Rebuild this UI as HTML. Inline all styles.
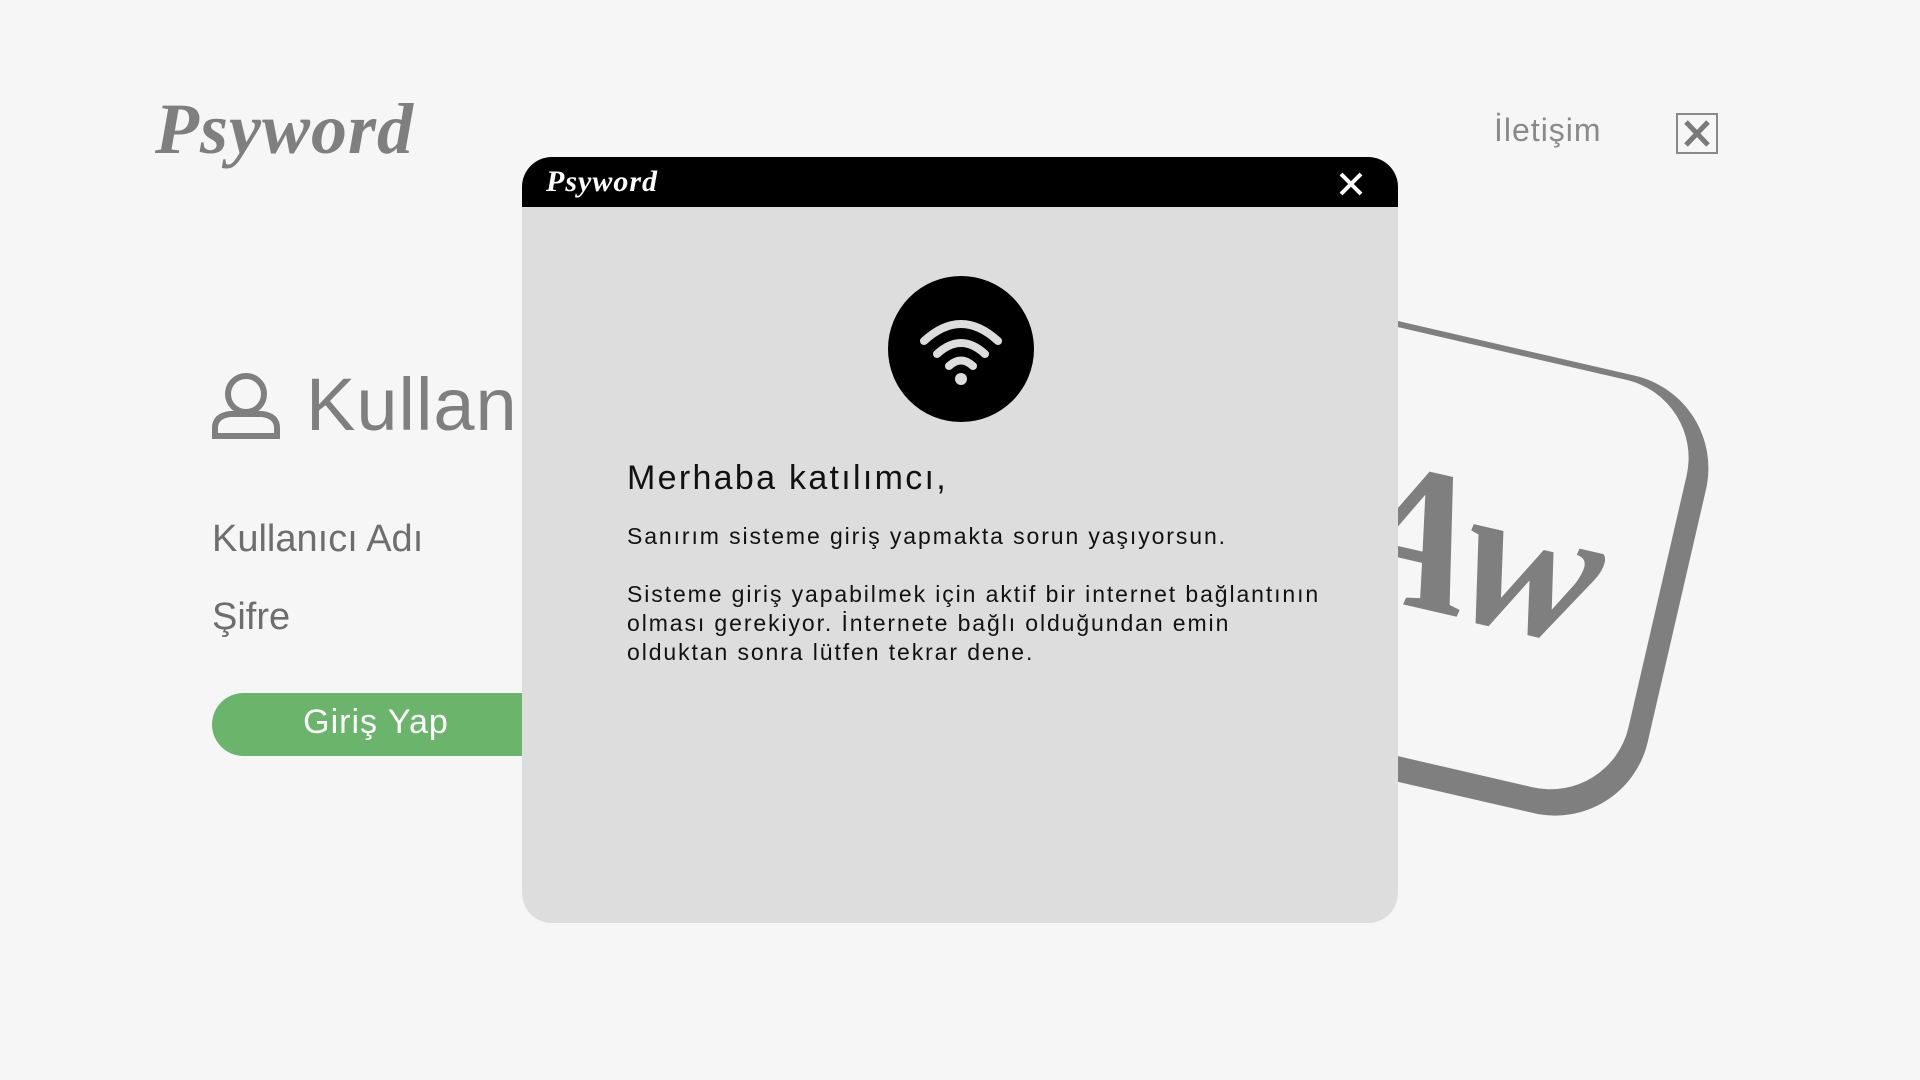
<!DOCTYPE html>
<html><head><meta charset="utf-8"><style>
*{margin:0;padding:0;box-sizing:border-box}
body{width:1920px;height:1080px;background:#f6f6f6;position:relative;overflow:hidden;font-family:"Liberation Sans",sans-serif}
.a{position:absolute;white-space:nowrap}
.logo{font-family:"Liberation Serif",serif;font-weight:bold}
</style></head><body>
<svg class="a" style="left:0;top:0" width="1920" height="1080">
 <g transform="translate(1398,321) rotate(13)">
  <rect x="-600" y="0" width="938" height="449" rx="95" fill="#7f7f7f"/>
  <rect x="-600" y="6" width="916" height="418" rx="80" fill="#f6f6f6"/>
  <text x="255" y="275" text-anchor="end" font-family="Liberation Serif,serif" font-weight="bold" font-style="italic" font-size="205" fill="#7f7f7f">Aw</text>
 </g>
</svg>
<div class="a logo" style="left:155px;top:88px;font-size:72px;color:#7f7f7f;font-style:italic;letter-spacing:1px">Psyword</div>
<div class="a" style="left:1494px;top:112px;font-size:32px;color:#8a8a8a;letter-spacing:1px">İletişim</div>
<div class="a" style="left:1676px;top:113px;width:42px;height:41px;border:2px solid #8a8a8a"></div>
<svg class="a" style="left:1676px;top:113px" width="42" height="41"><path d="M10 9 L32 32 M32 9 L10 32" stroke="#7a7a7a" stroke-width="5"/></svg>
<svg class="a" style="left:210px;top:372px" width="72" height="68"><circle cx="36" cy="22" r="18" fill="none" stroke="#7f7f7f" stroke-width="6"/><path d="M5 64 V56 Q5 44 20 42 H52 Q67 44 67 56 V64 Z" fill="none" stroke="#7f7f7f" stroke-width="6"/></svg>
<div class="a" style="left:306px;top:362px;font-size:74px;color:#7f7f7f;letter-spacing:1px">Kullan</div>
<div class="a" style="left:212px;top:518px;font-size:38px;color:#6e6e6e">Kullanıcı Adı</div>
<div class="a" style="left:212px;top:596px;font-size:38px;color:#6e6e6e">Şifre</div>
<div class="a" style="left:212px;top:693px;width:340px;height:63px;border-radius:32px;background:#6bb46b"></div>
<div class="a" style="left:212px;top:703px;width:336px;text-align:center;font-size:34px;color:#fff">
<span style="position:relative;left:-4px;letter-spacing:1px">Giriş Yap</span></div>
<div class="a" style="left:522px;top:157px;width:876px;height:766px;border-radius:30px;background:#dddddd;overflow:hidden">
 <div style="height:50px;background:#000;position:relative">
  <div class="a logo" style="left:24px;top:8px;font-size:30px;color:#fff;font-style:italic;letter-spacing:1px">Psyword</div>
  <svg class="a" style="left:816px;top:14px" width="26" height="26"><path d="M3 3 L23 23 M23 3 L3 23" stroke="#fff" stroke-width="4"/></svg>
 </div>
 <svg class="a" style="left:365px;top:118px" width="148" height="148"><circle cx="74" cy="74" r="73" fill="#000"/>
  <g fill="none" stroke="#ddd" stroke-width="8" stroke-linecap="round"><path d="M37 66 Q74 32 111 66"/><path d="M50 79 Q74 57 98 79"/><path d="M62 91 Q74 80 86 91"/></g>
  <circle cx="74" cy="104" r="6" fill="#ddd"/></svg>
 <div class="a" style="left:105px;top:302px;font-size:34px;color:#111;letter-spacing:2.3px">Merhaba katılımcı,</div>
 <div class="a" style="left:105px;top:366px;font-size:23px;color:#111;letter-spacing:1.9px">Sanırım sisteme giriş yapmakta sorun yaşıyorsun.</div>
 <div class="a" style="left:105px;top:423px;font-size:23px;color:#111;line-height:29px;letter-spacing:1.9px">Sisteme giriş yapabilmek için aktif bir internet bağlantının<br>olması gerekiyor. İnternete bağlı olduğundan emin<br>olduktan sonra lütfen tekrar dene.</div>
</div>
</body></html>
